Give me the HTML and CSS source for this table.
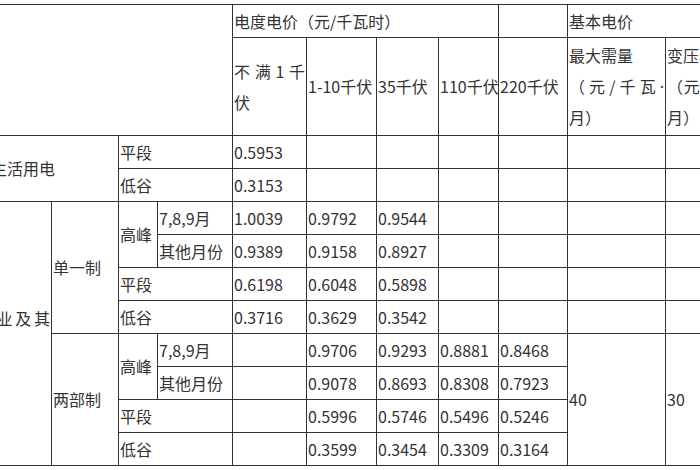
FILE: index.html
```html
<!DOCTYPE html>
<html lang="zh-CN">
<head>
<meta charset="utf-8">
<title>电价表</title>
<link rel="stylesheet" href="styles.css">
</head>
<body>
<div class="page">
<table class="tariff">
<colgroup>
<col class="c-a"><col class="c-b"><col class="c-c"><col class="c-d"><col class="c-e"><col class="c-f"><col class="c-g"><col class="c-h"><col class="c-i"><col class="c-j"><col class="c-k">
</colgroup>
<tbody>
<tr class="hrow">
<td colspan="4" rowspan="2"></td>
<td colspan="4" class="nw">电度电价（元/千瓦时）</td>
<td></td>
<td colspan="2" class="nw">基本电价</td>
</tr>
<tr class="tall">
<td class="hcell">不满1千伏</td>
<td class="nw">1-10千伏</td>
<td class="nw">35千伏</td>
<td class="nw">110千伏</td>
<td class="nw">220千伏</td>
<td class="hcell">最大需量<br>（元/千瓦<span class="dot">·</span>月）</td>
<td class="hcell">变压器容量<br>（元/千伏安<span class="dot">·</span>月）</td>
</tr>
<tr>
<td colspan="2" rowspan="2" class="nw">居民生活用电</td>
<td colspan="2">平段</td>
<td>0.5953</td><td></td><td></td><td></td><td></td><td></td><td></td>
</tr>
<tr>
<td colspan="2">低谷</td>
<td>0.3153</td><td></td><td></td><td></td><td></td><td></td><td></td>
</tr>
<tr>
<td rowspan="8">工商业及其他</td>
<td rowspan="4">单一制</td>
<td rowspan="2">高峰</td>
<td class="nw">7,8,9月</td>
<td>1.0039</td><td>0.9792</td><td>0.9544</td><td></td><td></td><td></td><td></td>
</tr>
<tr>
<td class="nw">其他月份</td>
<td>0.9389</td><td>0.9158</td><td>0.8927</td><td></td><td></td><td></td><td></td>
</tr>
<tr>
<td colspan="2">平段</td>
<td>0.6198</td><td>0.6048</td><td>0.5898</td><td></td><td></td><td></td><td></td>
</tr>
<tr>
<td colspan="2">低谷</td>
<td>0.3716</td><td>0.3629</td><td>0.3542</td><td></td><td></td><td></td><td></td>
</tr>
<tr>
<td rowspan="4">两部制</td>
<td rowspan="2">高峰</td>
<td class="nw">7,8,9月</td>
<td></td><td>0.9706</td><td>0.9293</td><td>0.8881</td><td>0.8468</td>
<td rowspan="4">40</td>
<td rowspan="4">30</td>
</tr>
<tr>
<td class="nw">其他月份</td>
<td></td><td>0.9078</td><td>0.8693</td><td>0.8308</td><td>0.7923</td>
</tr>
<tr>
<td colspan="2">平段</td>
<td></td><td>0.5996</td><td>0.5746</td><td>0.5496</td><td>0.5246</td>
</tr>
<tr>
<td colspan="2">低谷</td>
<td></td><td>0.3599</td><td>0.3454</td><td>0.3309</td><td>0.3164</td>
</tr>
</tbody>
</table>
</div>
</body>
</html>
```

FILE: styles.css
```css
html, body {
  margin: 0;
  padding: 0;
  background: #ffffff;
}
.page {
  width: 700px;
  height: 470px;
  overflow: hidden;
}
.tariff {
  border-collapse: collapse;
  table-layout: fixed;
  width: 806px;
  margin: 4px 0 0 -43px;
  font-family: "Noto Sans CJK SC", "Noto Sans", sans-serif;
  font-size: 16px;
  line-height: 30.5px;
  color: #333333;
}
.c-a { width: 94px; }
.c-b { width: 67px; }
.c-c { width: 39px; }
.c-d { width: 75px; }
.c-e { width: 74px; }
.c-f { width: 70px; }
.c-g { width: 62px; }
.c-h { width: 60px; }
.c-i { width: 69px; }
.c-j { width: 98px; }
.c-k { width: 98px; }
.tariff tr {
  height: 33px;
}
.tariff tr.tall {
  height: 98px;
}
.tariff td {
  border: 1px solid #333333;
  padding: 0 1px;
  vertical-align: middle;
  text-align: justify;
  overflow: hidden;
}
.tariff td.nw {
  white-space: nowrap;
  text-align: left;
}
.dot {
  font-family: "Noto Sans", sans-serif;
}
```
